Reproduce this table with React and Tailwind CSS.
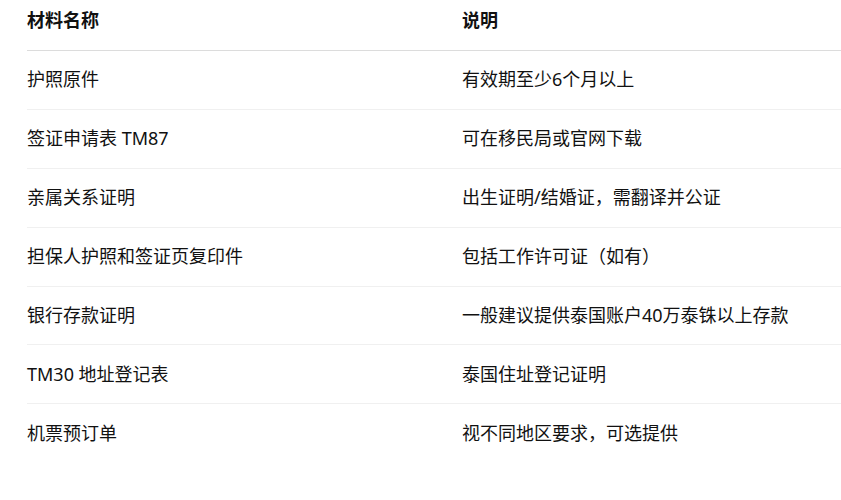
const rows = [
  ["护照原件", "有效期至少6个月以上"],
  ["签证申请表 TM87", "可在移民局或官网下载"],
  ["亲属关系证明", "出生证明/结婚证，需翻译并公证"],
  ["担保人护照和签证页复印件", "包括工作许可证（如有）"],
  ["银行存款证明", "一般建议提供泰国账户40万泰铢以上存款"],
  ["TM30 地址登记表", "泰国住址登记证明"],
  ["机票预订单", "视不同地区要求，可选提供"],
];

export default function App() {
  return (
    <div
      className="min-h-[500px] bg-white text-[#111] overflow-hidden"
      style={{ fontFamily: '"Noto Sans", "Noto Sans CJK SC", sans-serif' }}
    >
      <div className="ml-[27px] w-[814px] text-[18px] leading-[27px]">
        <div className="grid grid-cols-[435px_1fr] pt-[6.5px] pb-[16.5px] border-b border-[#dcdcdc] font-bold">
          <div>材料名称</div>
          <div>说明</div>
        </div>
        {rows.map((r, i) => (
          <div
            key={i}
            className={`grid grid-cols-[435px_1fr] py-[15.45px] ${i < rows.length - 1 ? "border-b border-[#f0f0f0]" : ""}`}
          >
            <div>{r[0]}</div>
            <div>{r[1]}</div>
          </div>
        ))}
      </div>
    </div>
  );
}
